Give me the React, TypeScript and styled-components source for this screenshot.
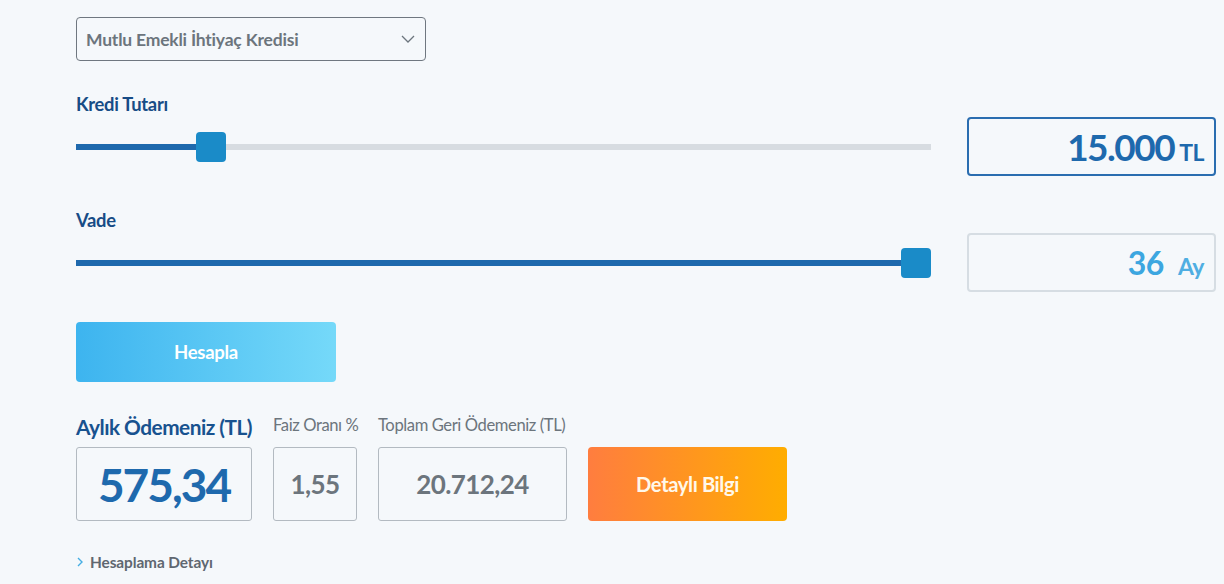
import React from "react";
import styled, { createGlobalStyle } from "styled-components";

const Global = createGlobalStyle`
  html, body { margin: 0; padding: 0; background: #f5f8fb; }
  body { font-family: Lato, "Open Sans", sans-serif; }
  * { box-sizing: border-box; }
`;

const Page = styled.div`
  width: 1224px;
  height: 584px;
  background: #f5f8fb;
  padding: 17px 9px 0 76px;
  overflow: hidden;
`;

const Select = styled.div`
  width: 350px;
  height: 44px;
  border: 1px solid #6f7780;
  border-radius: 4px;
  display: flex;
  align-items: center;
  justify-content: space-between;
  padding: 0 10px 0 9px;
  color: #6c757d;
  font-size: 17.5px;
  font-weight: 700;
  letter-spacing: -0.2px;
`;

const FieldBlock = styled.div<{ $top: number }>`
  margin-top: ${(p) => p.$top}px;
  display: grid;
  grid-template-columns: 855px 249px;
  column-gap: 36px;
  align-items: center;
`;

const Label = styled.div`
  grid-column: 1 / 2;
  font-size: 18.4px;
  line-height: 20px;
  font-weight: 700;
  color: #174c86;
  letter-spacing: -0.3px;
  margin-bottom: 3px;
`;

const Track = styled.div`
  position: relative;
  height: 6px;
  background: #d7dce1;
`;

const Fill = styled.div`
  height: 100%;
  background: #1e69ad;
`;

const Thumb = styled.div`
  position: absolute;
  top: 50%;
  width: 30px;
  height: 30px;
  margin-top: -15px;
  border-radius: 4px;
  background: #1a8bc8;
`;

const ValueBox = styled.div<{ $active?: boolean }>`
  height: 59px;
  border: 2px solid ${(p) => (p.$active ? "#2a6db0" : "#d6dde3")};
  border-radius: 4px;
  display: flex;
  align-items: baseline;
  justify-content: flex-end;
  padding: 0 10px 0 0;
`;

const BigNum = styled.span<{ $color: string; $size: number; $spacing: number }>`
  color: ${(p) => p.$color};
  font-size: ${(p) => p.$size}px;
  font-weight: 700;
  letter-spacing: ${(p) => p.$spacing}px;
  line-height: 55px;
`;

const Unit = styled.span<{ $color: string; $gap: number }>`
  color: ${(p) => p.$color};
  font-size: 23px;
  font-weight: 700;
  margin-left: ${(p) => p.$gap}px;
  letter-spacing: -0.5px;
`;

const CalcButton = styled.button`
  display: block;
  margin-top: 30px;
  width: 260px;
  height: 60px;
  border: none;
  border-radius: 4px;
  background: linear-gradient(90deg, #3db4ef 0%, #75d9f9 100%);
  color: #fff;
  font-family: inherit;
  font-size: 18.5px;
  font-weight: 700;
  letter-spacing: -0.3px;
  cursor: pointer;
`;

const Results = styled.div`
  margin-top: 33px;
  display: flex;
  align-items: flex-end;
  gap: 21px;
`;

const ResultCol = styled.div<{ $w: number }>`
  width: ${(p) => p.$w}px;
  display: flex;
  flex-direction: column;
`;

const ResultLabel = styled.div<{ $main?: boolean }>`
  height: 24px;
  white-space: nowrap;
  display: flex;
  align-items: flex-end;
  margin-bottom: 8px;
  font-size: ${(p) => (p.$main ? "20.8px" : "16.6px")};
  font-weight: ${(p) => (p.$main ? 700 : 400)};
  color: ${(p) => (p.$main ? "#18528f" : "#6c757d")};
  letter-spacing: ${(p) => (p.$main ? "-0.5px" : "-0.4px")};
  line-height: 20px;
  padding-bottom: ${(p) => (p.$main ? "2px" : "4px")};
`;

const ResultBox = styled.div`
  height: 74px;
  border: 1px solid #b3bac1;
  border-radius: 3px;
  display: flex;
  align-items: center;
  justify-content: center;
`;

const ResultValue = styled.span<{ $main?: boolean }>`
  font-size: ${(p) => (p.$main ? "46px" : "26px")};
  font-weight: 700;
  color: ${(p) => (p.$main ? "#1e69ad" : "#6c757d")};
  letter-spacing: ${(p) => (p.$main ? "-2px" : "-0.6px")};
`;

const InfoButton = styled.button`
  width: 199px;
  height: 74px;
  border: none;
  border-radius: 4px;
  background: linear-gradient(90deg, #ff7d3f 0%, #ffad00 100%);
  color: #fff8ea;
  font-family: inherit;
  font-size: 20.2px;
  font-weight: 700;
  letter-spacing: -0.4px;
  cursor: pointer;
`;

const DetailLink = styled.div`
  margin-top: 32px;
  display: flex;
  align-items: center;
  gap: 7px;
  padding-left: 1px;
  font-size: 15.4px;
  font-weight: 700;
  color: #5f6770;
  line-height: 18px;
  letter-spacing: -0.1px;
`;

type SliderProps = { fraction: number };

const Slider: React.FC<SliderProps> = ({ fraction }) => {
  const travel = 855 - 30;
  const left = Math.round(fraction * travel);
  return (
    <Track>
      <Fill style={{ width: left + 15 }} />
      <Thumb style={{ left }} />
    </Track>
  );
};

export default function App() {
  return (
    <>
      <Global />
      <Page>
        <Select>
          <span>Mutlu Emekli İhtiyaç Kredisi</span>
          <svg width="14" height="10" viewBox="0 0 14 10">
            <polyline
              points="1,2 7,8 13,2"
              fill="none"
              stroke="#6c757d"
              strokeWidth="1.3"
            />
          </svg>
        </Select>

        <FieldBlock $top={33}>
          <Label>Kredi Tutarı</Label>
          <div />
          <Slider fraction={120 / 825} />
          <ValueBox $active>
            <BigNum $color="#1e69ad" $size={37} $spacing={-1.5}>
              15.000
            </BigNum>
            <Unit $color="#1e69ad" $gap={5}>
              TL
            </Unit>
          </ValueBox>
        </FieldBlock>

        <FieldBlock $top={34}>
          <Label>Vade</Label>
          <div />
          <Slider fraction={1} />
          <ValueBox>
            <BigNum $color="#3ca6e0" $size={32} $spacing={-0.5}>
              36
            </BigNum>
            <Unit $color="#4faee2" $gap={14}>
              Ay
            </Unit>
          </ValueBox>
        </FieldBlock>

        <CalcButton>Hesapla</CalcButton>

        <Results>
          <ResultCol $w={176}>
            <ResultLabel $main>Aylık Ödemeniz (TL)</ResultLabel>
            <ResultBox>
              <ResultValue $main>575,34</ResultValue>
            </ResultBox>
          </ResultCol>
          <ResultCol $w={84}>
            <ResultLabel>Faiz Oranı %</ResultLabel>
            <ResultBox>
              <ResultValue>1,55</ResultValue>
            </ResultBox>
          </ResultCol>
          <ResultCol $w={189}>
            <ResultLabel>Toplam Geri Ödemeniz (TL)</ResultLabel>
            <ResultBox>
              <ResultValue>20.712,24</ResultValue>
            </ResultBox>
          </ResultCol>
          <InfoButton>Detaylı Bilgi</InfoButton>
        </Results>

        <DetailLink>
          <svg width="6" height="10" viewBox="0 0 6 10">
            <polyline
              points="1,1 5,5 1,9"
              fill="none"
              stroke="#45aee3"
              strokeWidth="1.4"
            />
          </svg>
          <span>Hesaplama Detayı</span>
        </DetailLink>
      </Page>
    </>
  );
}
